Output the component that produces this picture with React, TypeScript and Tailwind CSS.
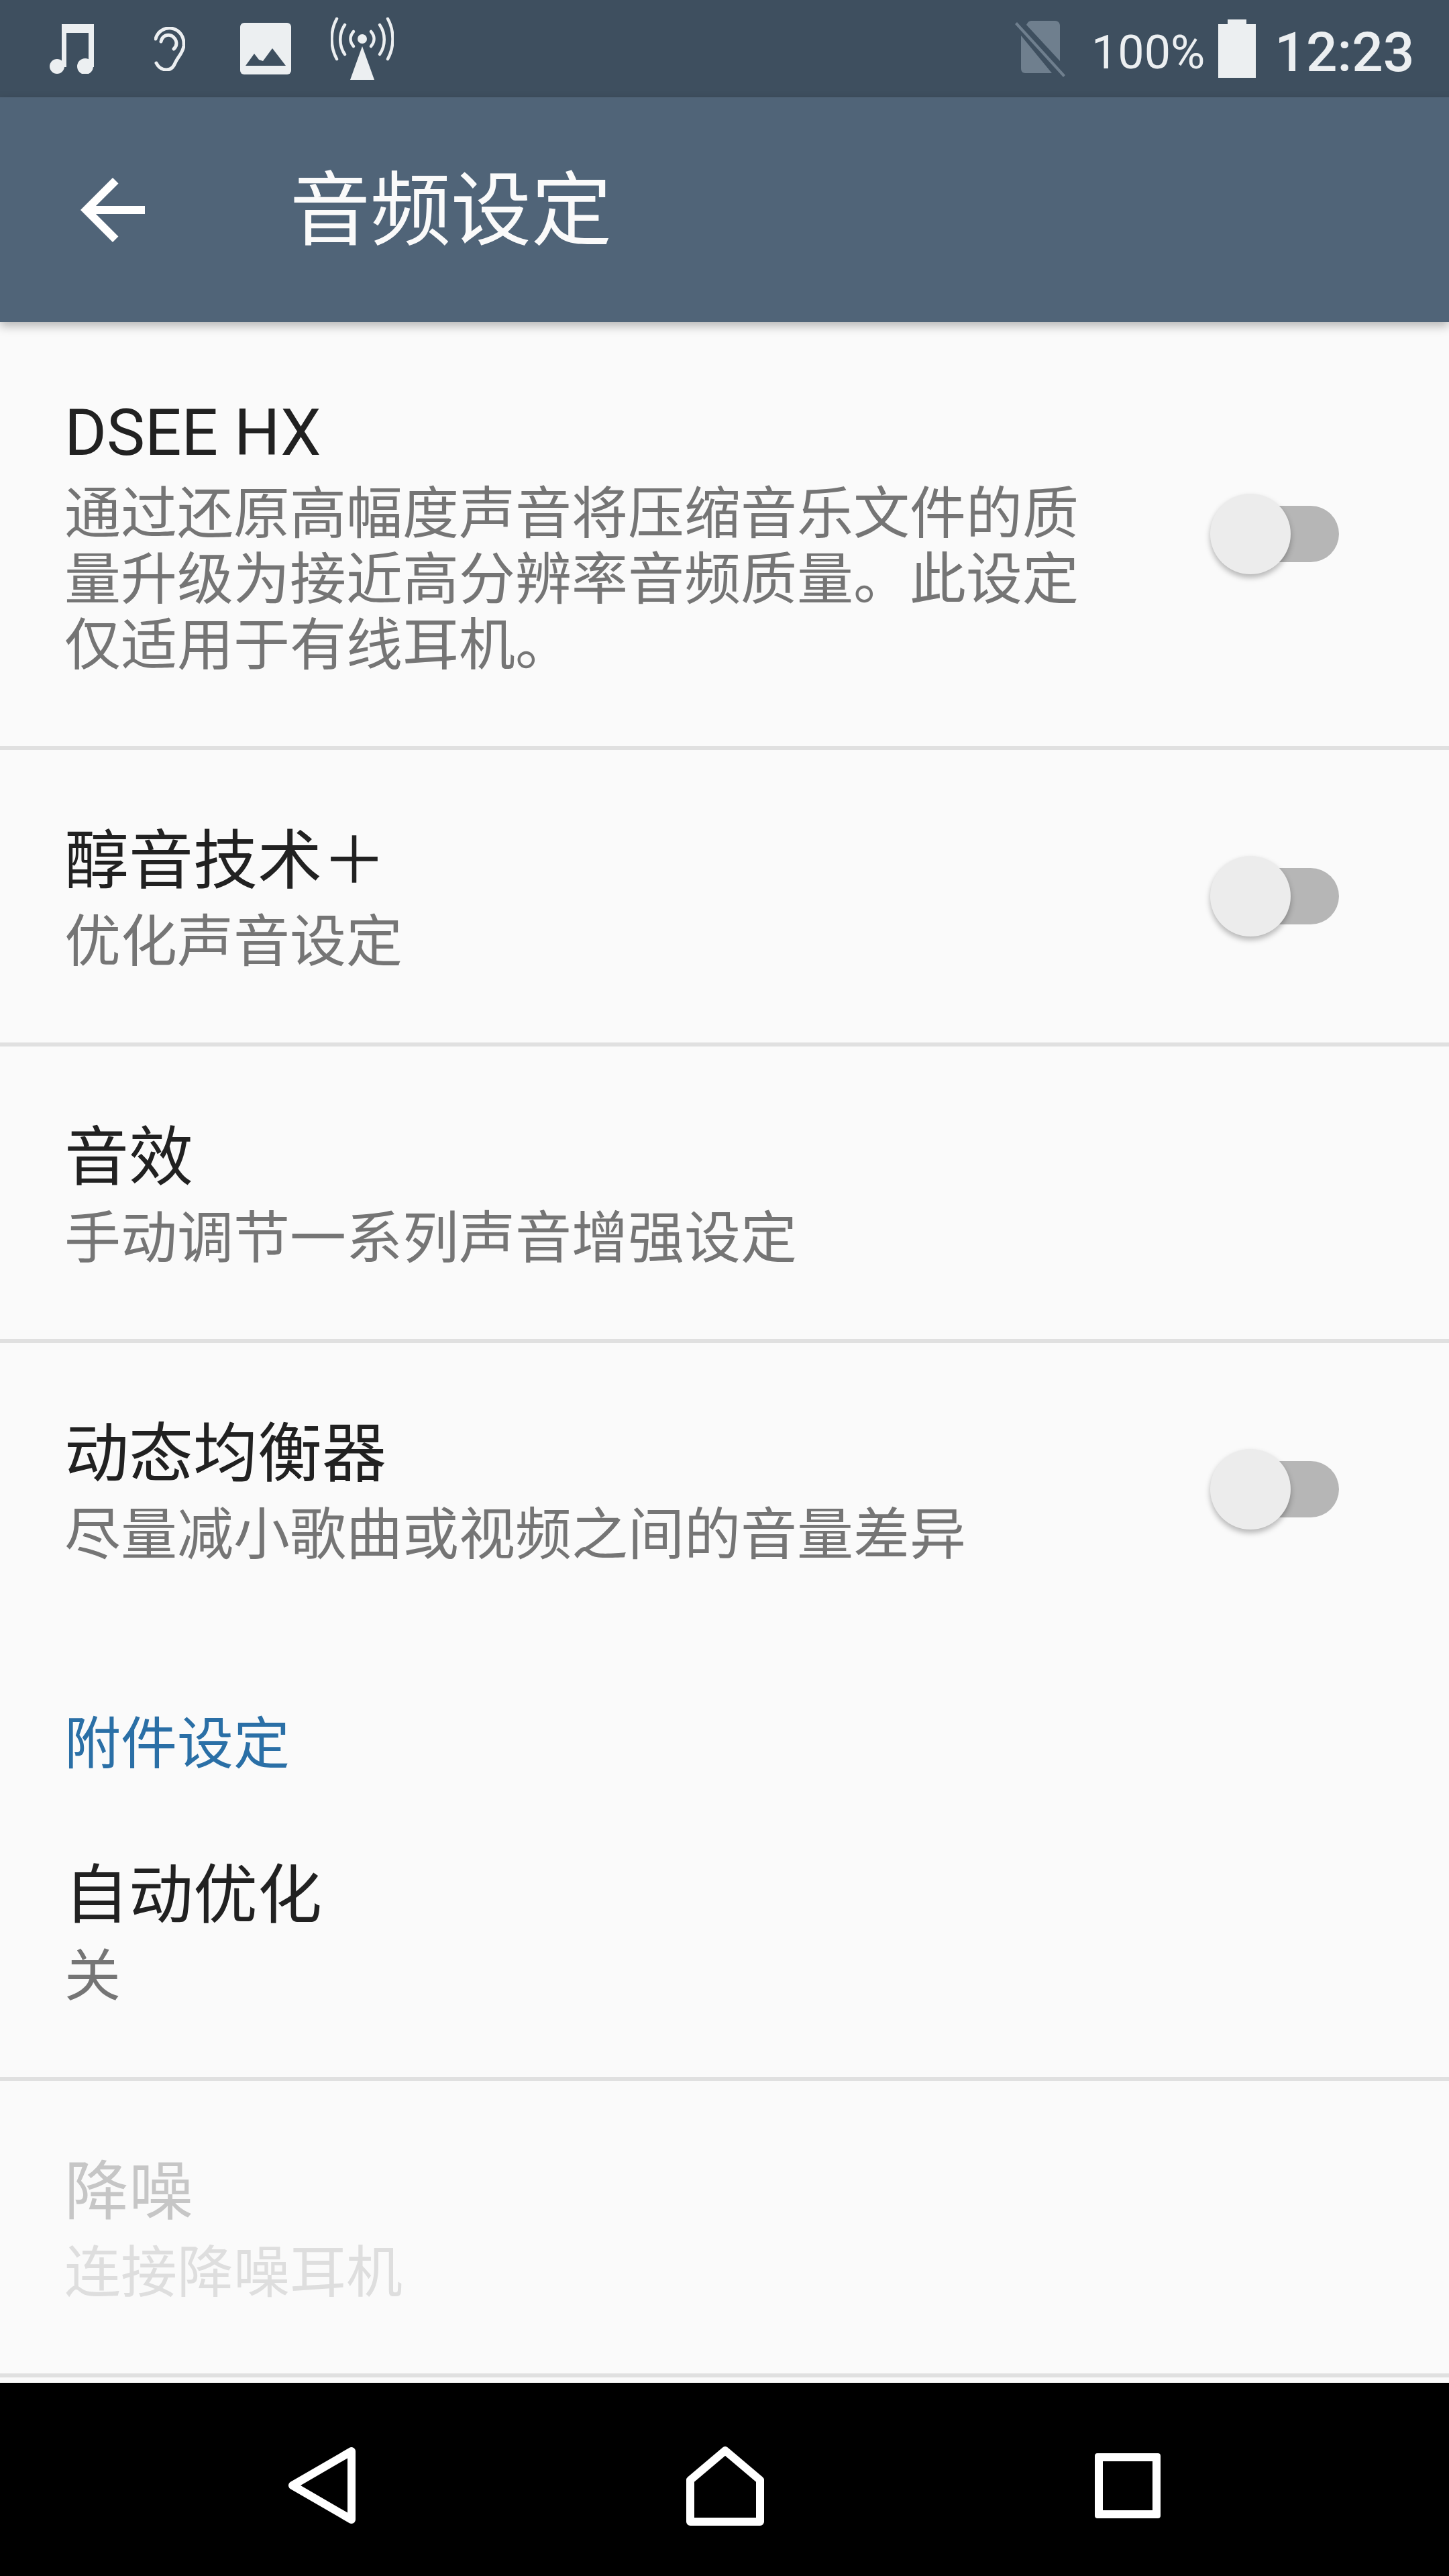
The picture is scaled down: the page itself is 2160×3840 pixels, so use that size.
import React from "react";

const iconColor = "#eceff1";
const barColor = "#3e4f5f";

const Toggle = () => (
  <div className="relative ml-auto mr-[164px] h-[120px] w-[192px] shrink-0">
    <div className="absolute right-0 top-[18px] h-[84px] w-[170px] rounded-full bg-[#b6b6b6]" />
    <div className="absolute left-0 top-0 h-[120px] w-[120px] rounded-full bg-[#ececec] shadow-[0_5px_9px_rgba(0,0,0,0.28)]" />
  </div>
);

interface RowProps {
  title: string;
  sub: string;
  toggle?: boolean;
  divider?: boolean;
  disabled?: boolean;
}

const Row = ({ title, sub, toggle, divider = true, disabled }: RowProps) => (
  <div className={divider ? "border-b-[6px] border-[#e0e0e0]" : ""}>
    <div className="flex items-center">
      <div className="w-[1620px] pb-[100px] pl-[96px] pt-[101px]">
        <div className={`text-[96px] leading-[128px] ${disabled ? "text-[#c6c6c6]" : "text-[#212121]"}`}>{title}</div>
        <div className={`mt-[9px] text-[84px] leading-[98px] ${disabled ? "text-[#dedede]" : "text-[#757575]"}`}>{sub}</div>
      </div>
      {toggle && <Toggle />}
    </div>
  </div>
);

const StatusIcons = () => (
  <div className="flex items-center">
    <svg width="66" height="74" viewBox="0 0 66 74" className="ml-[74px]" fill={iconColor}>
      <path d="M18 0H66V64H58V13H25V64H18Z" />
      <circle cx="11" cy="63" r="11" />
      <circle cx="53" cy="63" r="12" />
    </svg>
    <svg width="46" height="66" viewBox="0 0 46 66" className="ml-[90px]" fill="none" stroke={iconColor} strokeWidth="5" strokeLinecap="round">
      <path d="M2 18C5 6 16 1 25 2C38 4 45 15 44 28C43 38 36 44 32 52C29 59 26 64 18 64C11 64 6 60 3 54" />
      <path d="M10 22C12 13 20 10 27 14C34 19 35 28 29 33" />
    </svg>
    <svg width="76" height="77" viewBox="0 0 76 77" className="ml-[82px]">
      <rect width="76" height="77" rx="6" fill={iconColor} />
      <path d="M8 64L21 46L28 55L34 57L48 38L68 64Z" fill={barColor} />
    </svg>
    <svg width="94" height="94" viewBox="0 0 94 94" className="ml-[59px]" fill="none" stroke={iconColor} strokeWidth="4.5" strokeLinecap="round">
      <circle cx="47" cy="32" r="7" fill={iconColor} stroke="none" />
      <path d="M47 43L65 93H29Z" fill={iconColor} stroke="none" />
      <path d="M34 21C28 28 28 36 34 43" />
      <path d="M60 21C66 28 66 36 60 43" />
      <path d="M21 11C12 24 12 42 21 55" />
      <path d="M73 11C82 24 82 42 73 55" />
      <path d="M9 2C-1 20 -1 44 9 62" />
      <path d="M85 2C95 20 95 44 85 62" />
    </svg>
    <svg width="78" height="84" viewBox="0 0 78 84" className="ml-[924px]" fill="#6f7f8e">
      <path d="M26 0H62C66 0 69 3 69 7V60L19 6C21 2 23 0 26 0ZM11 22L57 78H17C13 78 11 75 11 71Z" />
      <path d="M2 5L5 2L77 81L74 84Z" />
    </svg>
    <span className="ml-[38px] pt-[10px] text-[70px] font-normal leading-none text-[#eceff1]">100%</span>
    <svg width="56" height="87" viewBox="0 0 56 87" className="ml-[20px]" fill={iconColor}>
      <path d="M14 0H42V7H56V87H0V7H14Z" />
    </svg>
    <span className="ml-[28px] pt-[10px] text-[82px] font-medium leading-none text-[#eceff1]">12:23</span>
  </div>
);

const NavBar = () => (
  <div className="flex h-[288px] items-center justify-center gap-[493px] bg-black pt-[18px]">
    <svg width="100" height="114" viewBox="0 0 100 114" fill="none" stroke="#fff" strokeWidth="12" strokeLinejoin="round">
      <path d="M94 6V108L6 57Z" />
    </svg>
    <svg width="116" height="120" viewBox="0 0 116 120" fill="none" stroke="#fff" strokeWidth="12" strokeLinejoin="round">
      <path d="M58 8L110 52V114H6V52Z" />
    </svg>
    <div className="h-[97px] w-[98px] rounded-[4px] border-[12px] border-white" />
  </div>
);

export default function App() {
  return (
    <div lang="zh-CN" className="flex h-[3840px] w-[2160px] flex-col overflow-hidden bg-[#fafafa] font-['Roboto','Noto_Sans_CJK_SC',sans-serif]">
      <div className="flex h-[145px] shrink-0 items-center bg-[#3e4f5f]">
        <StatusIcons />
      </div>
      <div className="relative z-10 flex h-[335px] shrink-0 items-center bg-[#506478] shadow-[0_6px_14px_rgba(0,0,0,0.28)]">
        <svg width="144" height="144" viewBox="0 0 24 24" className="ml-[96px]" fill="#fff">
          <path d="M20 11H7.83l5.59-5.59L12 4l-8 8 8 8 1.41-1.41L7.83 13H20v-2z" />
        </svg>
        <span className="ml-[192px] pt-[5px] text-[120px] leading-none text-[#fafafa]">音频设定</span>
      </div>

      <div className="flex-1">
        <Row title="DSEE HX" sub="通过还原高幅度声音将压缩音乐文件的质量升级为接近高分辨率音频质量。此设定仅适用于有线耳机。" toggle />
        <Row title="醇音技术＋" sub="优化声音设定" toggle />
        <Row title="音效" sub="手动调节一系列声音增强设定" />
        <Row title="动态均衡器" sub="尽量减小歌曲或视频之间的音量差异" toggle divider={false} />
        <div className="h-[222px] pl-[96px] pt-[114px] text-[84px] leading-[98px] text-[#2a6fa6]">附件设定</div>
        <Row title="自动优化" sub="关" />
        <Row title="降噪" sub="连接降噪耳机" disabled />
      </div>

      <NavBar />
    </div>
  );
}
